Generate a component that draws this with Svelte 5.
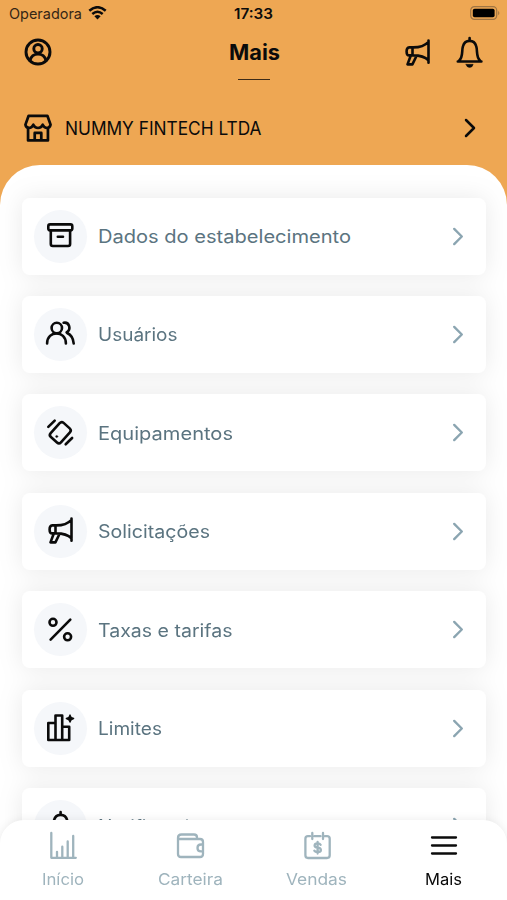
<script lang="ts">
	interface MenuItem {
		label: string;
		icon: string;
		width: number;
	}

	const items: MenuItem[] = [
		{ label: 'Dados do estabelecimento', icon: 'archive', width: 253 },
		{ label: 'Usuários', icon: 'users', width: 79.5 },
		{ label: 'Equipamentos', icon: 'device', width: 135 },
		{ label: 'Solicitações', icon: 'megaphone', width: 112 },
		{ label: 'Taxas e tarifas', icon: 'percent', width: 134.5 },
		{ label: 'Limites', icon: 'limits', width: 64 },
		{ label: 'Notificações', icon: 'bell', width: 114 }
	];

	const tabs: MenuItem[] = [
		{ label: 'Início', icon: 'chart', width: 42 },
		{ label: 'Carteira', icon: 'wallet', width: 65 },
		{ label: 'Vendas', icon: 'calendar', width: 61 },
		{ label: 'Mais', icon: 'menu', width: 37 }
	];

	let active: string = $state('Mais');
</script>

{#snippet icon(name: string)}
	<svg class="icon" viewBox="0 0 32 32" aria-hidden="true">
		{#if name === 'archive'}
			<rect x="3.3" y="4.4" width="24" height="6" rx="1.8" />
			<path d="M5.8 10.7v13.3q0 2 2 2h15.3q2 0 2-2V10.7M12.8 16.800h5.200" />
		{:else if name === 'users'}
			<circle cx="11.8" cy="10" r="5.2" />
			<path d="M2.1 25.500c0-13.500 18.800-13.500 18.800 0M18.600 4.800c5.800-1 8 6.700 3 9.500M22.100 15c4 1.800 6.200 5.300 6.600 10.500" />
		{:else if name === 'device'}
			<rect x="8.400" y="6.200" width="13.800" height="19" rx="2.800" transform="rotate(42 15.3 15.7)" />
			<path d="M3.300 9.900l6.400-6.300M20.700 27.300l6.400-6.300" />
			<circle class="fill" cx="11.700" cy="19.500" r="1.100" />
		{:else if name === 'megaphone'}
			<path d="M26.500 3.500v22.300M26.500 4.800c-4 4.300-9 5.600-15.300 5.600H7.200q-2.600 0-2.600 4t2.600 4h4c6.300 0 11.300 1 15.300 5M10.500 10.500v7.900M8.700 18.700L5.500 27.400h4.900l4.200-8.700" />
		{:else if name === 'percent'}
			<circle cx="8" cy="8.300" r="3.500" />
			<circle cx="22.600" cy="22.800" r="3.500" />
			<path d="M25.300 5.600L5.600 25.600" />
		{:else if name === 'limits'}
			<path d="M3.300 28V11h7.200v17M10.500 28V3.500h6.700V28M17.200 14.700h7V28M3.300 28h20.900" />
			<path class="fill star" d="M25 3q.5 3 3.700 3.500-3.200.5-3.700 3.700-.5-3.200-3.700-3.700Q24.500 6 25 3z" />
		{:else if name === 'bell'}
			<path d="M3.800 25.500h23.600M5 24.700c4.500-3.500 2.400-9.800 4-14.500 1-3.500 3.800-5.300 6.600-5.300s5.600 1.800 6.600 5.300c1.600 4.700-.5 11 4 14.500M15.600 2v2.600" />
			<path class="fill" d="M12 28.300h7.200q-.7 3.200-3.600 3.200T12 28.300z" />
		{:else if name === 'chart'}
			<path d="M4.300 3v24.800h24.500M10 21.800v6M15.300 16.700v11.100M20.700 11.500v16.300M26.200 6v21.800" />
		{:else if name === 'wallet'}
			<path d="M5 9h21q3 0 3 3v12q0 3-3 3H7q-3 0-3-3V8q0-3.500 3.500-3.500H20q3 0 3 3V9M29 14.500h-2q-3.500 0-3.500 3.400t3.500 3.400h2z" />
		{:else if name === 'calendar'}
			<path d="M9 6.200H7q-2.600 0-2.600 2.600v16.500q0 2.700 2.600 2.700h19q2.700 0 2.700-2.700V8.800q0-2.600-2.700-2.600h-2M13.500 6.200h6M11.300 3v6M22 3v6" />
			<path d="M19.600 14.800q-.8-1.500-3-1.500-3 0-3 2.200 0 1.900 3 2.100 3.300.3 3.300 2.400t-3.300 2.200q-2.400 0-3.300-1.500M16.600 12v11.500" />
		{:else if name === 'menu'}
			<path d="M4 7.500h24M4 15.500h24M4 23.500h24" />
		{:else if name === 'user'}
			<circle cx="16" cy="16" r="12" />
			<circle cx="16" cy="12.700" r="4.200" />
			<path d="M8 24.300c2.300-8.300 13.700-8.300 16 0" />
		{:else if name === 'store'}
			<path d="M6 3h20l3.400 9.400q-.8 3.600-3.800 3.600T21 12.500q-1.500 3.500-5 3.500t-5-3.500Q9.500 16 6.400 16t-3.800-3.600zM5.400 15.500v13.800h21.200V15.500M12.500 29.200v-8h7v8" />
		{/if}
	</svg>
{/snippet}

{#snippet label(text: string, width: number)}
	<svg class="label" style:width="{width}px" role="img" aria-label={text}>
		<text x="0" y="20" textLength={width} lengthAdjust="spacingAndGlyphs">{text}</text>
	</svg>
{/snippet}

<div class="screen">
	<header>
		<div class="status">
			<div class="carrier">
				{@render label('Operadora', 73)}
				<svg class="wifi" viewBox="0 0 19 14" aria-hidden="true">
					<path d="M1.300 4.800q8.200-7.200 16.400 0M4.300 8q5.200-4.400 10.400 0" />
					<path class="dot" d="M6.400 10.300q3.100-2.400 6.200 0l-3.100 3.100z" />
				</svg>
			</div>
			<div class="time">{@render label('17:33', 39)}</div>
			<svg class="battery" viewBox="0 0 31 14" aria-hidden="true">
				<rect class="shell" x=".7" y=".7" width="26" height="12.600" rx="3.700" />
				<rect x="2.800" y="2.800" width="21.800" height="8.400" rx="1.800" />
				<path class="tip" d="M28.200 4.700q2.300 2.300 0 4.600z" />
			</svg>
		</div>

		<div class="topbar">
			<button class="user" aria-label="Perfil">{@render icon('user')}</button>
			<h1>{@render label('Mais', 51)}</h1>
			<div class="actions">
				<button aria-label="Solicitações">{@render icon('megaphone')}</button>
				<button aria-label="Notificações">{@render icon('bell')}</button>
			</div>
		</div>

		<div class="company">
			{@render icon('store')}
			{@render label('NUMMY FINTECH LTDA', 196.5)}
			<svg class="chevron" viewBox="0 0 12 20" aria-hidden="true"><path d="M2 2l8 8-8 8" /></svg>
		</div>
	</header>

	<main>
		<ul>
			{#each items as item}
				<li>
					<span class="circle">{@render icon(item.icon)}</span>
					{@render label(item.label, item.width)}
					<svg class="chevron" viewBox="0 0 12 20" aria-hidden="true"><path d="M2 2l8 8-8 8" /></svg>
				</li>
			{/each}
		</ul>
	</main>

	<nav>
		{#each tabs as tab}
			<button class="tab" class:active={active === tab.label} onclick={() => (active = tab.label)}>
				{@render icon(tab.icon)}
				{@render label(tab.label, tab.width)}
			</button>
		{/each}
	</nav>
</div>

<style>
	:global(body) {
		margin: 0;
	}

	.screen {
		position: relative;
		width: 507px;
		height: 900px;
		overflow: hidden;
		font-family: Inter, sans-serif;
		color: #0b0b0b;
		background: linear-gradient(#eea753 0 450px, #fff 450px);
	}

	button {
		padding: 0;
		border: 0;
		background: none;
		color: inherit;
		font: inherit;
	}

	.icon {
		display: block;
		flex: none;
		width: 32px;
		height: 32px;
		fill: none;
		stroke: currentColor;
		stroke-width: 2.6;
		stroke-linecap: round;
		stroke-linejoin: round;
	}

	.icon .fill {
		fill: currentColor;
		stroke-width: 0.4;
	}

	.icon .star {
		stroke-width: 1.3;
	}

	.label {
		display: block;
		flex: none;
		height: 26px;
		overflow: visible;
		fill: currentColor;
		font-size: 18px;
	}

	header {
		height: 165px;
	}

	.status {
		display: grid;
		grid-template-columns: 1fr auto 1fr;
		align-items: start;
		height: 28px;
		padding: 0 6px 0 9px;
	}

	.status .label {
		height: 28px;
		margin-top: -1px;
		font-size: 14.5px;
	}

	.carrier {
		display: flex;
		gap: 6px;
		color: #352615;
	}

	.time {
		margin-right: 3px;
	}

	.time .label {
		font-weight: 600;
	}

	.wifi {
		width: 19px;
		height: 14px;
		margin-top: 6px;
		fill: none;
		stroke: #0b0b0b;
		stroke-width: 2.5;
	}

	.wifi .dot {
		fill: #0b0b0b;
		stroke: none;
	}

	.battery {
		justify-self: end;
		width: 31px;
		height: 14px;
		margin-top: 6px;
	}

	.battery .shell {
		fill: none;
		stroke: #a07543;
		stroke-width: 1.2;
	}

	.battery .tip {
		fill: #a07543;
	}

	.topbar {
		display: grid;
		grid-template-columns: 1fr auto 1fr;
		height: 72px;
		padding: 8px 21px 0 22px;
		box-sizing: border-box;
	}

	.user {
		align-self: start;
	}

	.user .icon {
		stroke-width: 2.9;
	}

	h1 {
		display: flex;
		flex-direction: column;
		align-items: center;
		margin: 4px 0 0;
	}

	h1 .label {
		font-size: 21px;
		font-weight: 650;
	}

	h1::after {
		content: '';
		width: 32px;
		height: 1.5px;
		margin-top: 12.5px;
		background: #3d2b17;
	}

	.actions {
		display: flex;
		justify-content: end;
		align-items: start;
		gap: 20.5px;
	}

	.actions button:first-child .icon {
		margin-top: 1px;
	}

	.company {
		display: flex;
		align-items: center;
		height: 56px;
		padding: 0 31.5px 0 23px;
	}

	.company .icon {
		width: 30px;
		height: 30px;
		stroke-width: 2.9;
	}

	.company .label {
		margin-left: 11.5px;
		font-size: 18.5px;
	}

	.chevron {
		width: 12px;
		height: 20px;
		margin-left: auto;
		fill: none;
		stroke: currentColor;
		stroke-width: 2.5;
		stroke-linecap: round;
		stroke-linejoin: round;
	}

	main {
		width: 506.5px;
		height: 735px;
		box-sizing: border-box;
		padding: 32.6px 20.5px 0 22px;
		border-radius: 40px 40px 0 0;
		background: #fff;
		overflow: hidden;
	}

	ul {
		display: flex;
		flex-direction: column;
		gap: 21.4px;
		margin: 0;
		padding: 0;
		list-style: none;
		filter: drop-shadow(0 0 12px rgba(0, 0, 0, 0.085));
	}

	li {
		display: flex;
		align-items: center;
		height: 77px;
		box-sizing: border-box;
		padding: 0 22.5px 0 12px;
		border-radius: 8px;
		background: #fff;
		color: #5b7480;
	}

	li .chevron {
		height: 19px;
		color: #8ba5b1;
	}

	.circle {
		display: grid;
		place-items: center;
		width: 53px;
		height: 53px;
		border-radius: 50%;
		background: #f5f7fa;
		color: #0b0b0b;
	}

	li .label {
		margin-left: 11px;
	}

	nav {
		position: absolute;
		left: 0;
		right: 0;
		bottom: 0;
		display: grid;
		grid-template-columns: repeat(4, 1fr);
		height: 80px;
		border-radius: 24px 24px 0 0;
		background: #fff;
		box-shadow: 0 0 10px rgba(0, 0, 0, 0.08);
	}

	.tab {
		display: flex;
		flex-direction: column;
		align-items: center;
		padding-top: 10px;
		color: #9fb4bd;
	}

	.tab .icon {
		stroke-width: 2.3;
	}

	.tab .label {
		margin-top: 3px;
		font-size: 16px;
	}

	.tab.active {
		color: #0b0b0b;
	}
</style>
